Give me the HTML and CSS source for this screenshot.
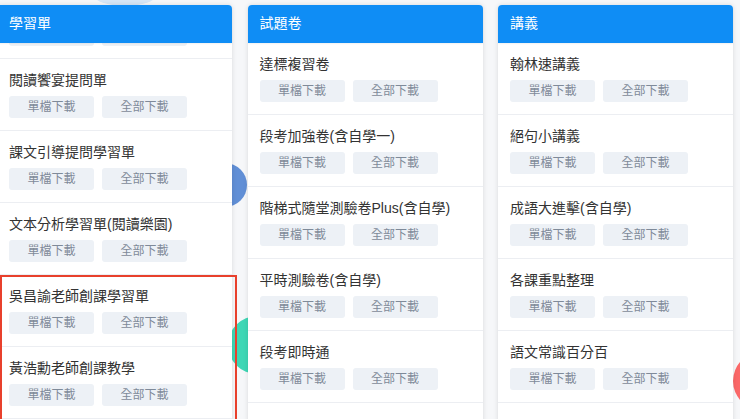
FILE: index.html
```html
<!DOCTYPE html>
<html lang="zh-Hant">
<head>
<meta charset="utf-8">
<title>下載專區</title>
<link rel="stylesheet" href="styles.css">
</head>
<body>
<div class="deco deco-top"></div>
<div class="deco deco-blue"></div>
<div class="deco deco-teal"></div>
<div class="deco deco-red"></div>

<main class="board">
  <section class="card">
    <header class="card-head">學習單</header>
    <div class="list list-scrolled">
      <div class="item stub" aria-hidden="true">
        <div class="btns"><span class="btn"></span><span class="btn"></span></div>
      </div>
      <div class="item">
        <div class="title">閱讀饗宴提問單</div>
        <div class="btns"><span class="btn">單檔下載</span><span class="btn">全部下載</span></div>
      </div>
      <div class="item">
        <div class="title">課文引導提問學習單</div>
        <div class="btns"><span class="btn">單檔下載</span><span class="btn">全部下載</span></div>
      </div>
      <div class="item">
        <div class="title">文本分析學習單(閱讀樂園)</div>
        <div class="btns"><span class="btn">單檔下載</span><span class="btn">全部下載</span></div>
      </div>
      <div class="item">
        <div class="title">吳昌諭老師創課學習單</div>
        <div class="btns"><span class="btn">單檔下載</span><span class="btn">全部下載</span></div>
      </div>
      <div class="item">
        <div class="title">黃浩勳老師創課教學</div>
        <div class="btns"><span class="btn">單檔下載</span><span class="btn">全部下載</span></div>
      </div>
    </div>
  </section>

  <section class="card">
    <header class="card-head">試題卷</header>
    <div class="list">
      <div class="item">
        <div class="title">達標複習卷</div>
        <div class="btns"><span class="btn">單檔下載</span><span class="btn">全部下載</span></div>
      </div>
      <div class="item">
        <div class="title">段考加強卷(含自學一)</div>
        <div class="btns"><span class="btn">單檔下載</span><span class="btn">全部下載</span></div>
      </div>
      <div class="item">
        <div class="title">階梯式隨堂測驗卷Plus(含自學)</div>
        <div class="btns"><span class="btn">單檔下載</span><span class="btn">全部下載</span></div>
      </div>
      <div class="item">
        <div class="title">平時測驗卷(含自學)</div>
        <div class="btns"><span class="btn">單檔下載</span><span class="btn">全部下載</span></div>
      </div>
      <div class="item">
        <div class="title">段考即時通</div>
        <div class="btns"><span class="btn">單檔下載</span><span class="btn">全部下載</span></div>
      </div>
    </div>
  </section>

  <section class="card">
    <header class="card-head">講義</header>
    <div class="list">
      <div class="item">
        <div class="title">翰林速講義</div>
        <div class="btns"><span class="btn">單檔下載</span><span class="btn">全部下載</span></div>
      </div>
      <div class="item">
        <div class="title">絕句小講義</div>
        <div class="btns"><span class="btn">單檔下載</span><span class="btn">全部下載</span></div>
      </div>
      <div class="item">
        <div class="title">成語大進擊(含自學)</div>
        <div class="btns"><span class="btn">單檔下載</span><span class="btn">全部下載</span></div>
      </div>
      <div class="item">
        <div class="title">各課重點整理</div>
        <div class="btns"><span class="btn">單檔下載</span><span class="btn">全部下載</span></div>
      </div>
      <div class="item">
        <div class="title">語文常識百分百</div>
        <div class="btns"><span class="btn">單檔下載</span><span class="btn">全部下載</span></div>
      </div>
    </div>
  </section>
</main>

<div class="highlight"></div>
</body>
</html>
```

FILE: styles.css
```css
html, body {
  margin: 0;
  padding: 0;
}
body {
  width: 740px;
  height: 419px;
  overflow: hidden;
  position: relative;
  background: #f6f7f9;
  font-family: "Liberation Sans", "Noto Sans CJK TC", sans-serif;
}

.deco {
  position: absolute;
  border-radius: 50%;
  z-index: 0;
}
.deco-top {
  left: 92px;
  top: -20px;
  width: 66px;
  height: 26px;
  background: #d6e6f6;
}
.deco-blue {
  left: 203px;
  top: 163px;
  width: 44px;
  height: 44px;
  background: #618fd6;
}
.deco-teal {
  left: 228px;
  top: 316px;
  width: 58px;
  height: 58px;
  background: #3ed7b5;
}
.deco-red {
  left: 733px;
  top: 352px;
  width: 58px;
  height: 58px;
  background: #fb6868;
}

.board {
  position: relative;
  z-index: 1;
  display: grid;
  grid-template-columns: 235px 235px 235px;
  column-gap: 15.5px;
  margin-left: -3px;
  padding-top: 5px;
}

.card {
  background: #ffffff;
  border-radius: 4px 4px 0 0;
  box-shadow: 0 0 5px rgba(0, 0, 0, 0.12);
  min-height: 430px;
  display: flex;
  flex-direction: column;
}

.card-head {
  position: relative;
  z-index: 2;
  height: 38px;
  line-height: 37px;
  padding: 0 12px;
  background: #0f8df5;
  color: #ffffff;
  font-size: 14px;
  border-radius: 4px 4px 0 0;
  box-shadow: 0 1px 2px rgba(0, 0, 0, 0.06);
}

.list {
  overflow: hidden;
  flex: 1;
}
.list-scrolled .stub {
  margin-top: -19px;
  padding-top: 0;
}

.item {
  padding: 11px 12px 12px;
  border-bottom: 1px solid #eceef2;
}

.title {
  height: 20px;
  line-height: 20px;
  font-size: 14px;
  color: #333333;
  white-space: nowrap;
}

.btns {
  display: flex;
  gap: 8px;
  margin-top: 6px;
}
.stub .btns {
  margin-top: 0;
}

.btn {
  width: 85px;
  height: 22px;
  line-height: 22px;
  text-align: center;
  font-size: 12px;
  color: #7f8a99;
  background: #edf1f6;
  border-radius: 3px;
}

.highlight {
  position: absolute;
  z-index: 3;
  left: 0;
  top: 275px;
  width: 237px;
  height: 160px;
  border: 2px solid #e8402c;
  box-sizing: border-box;
}
```
